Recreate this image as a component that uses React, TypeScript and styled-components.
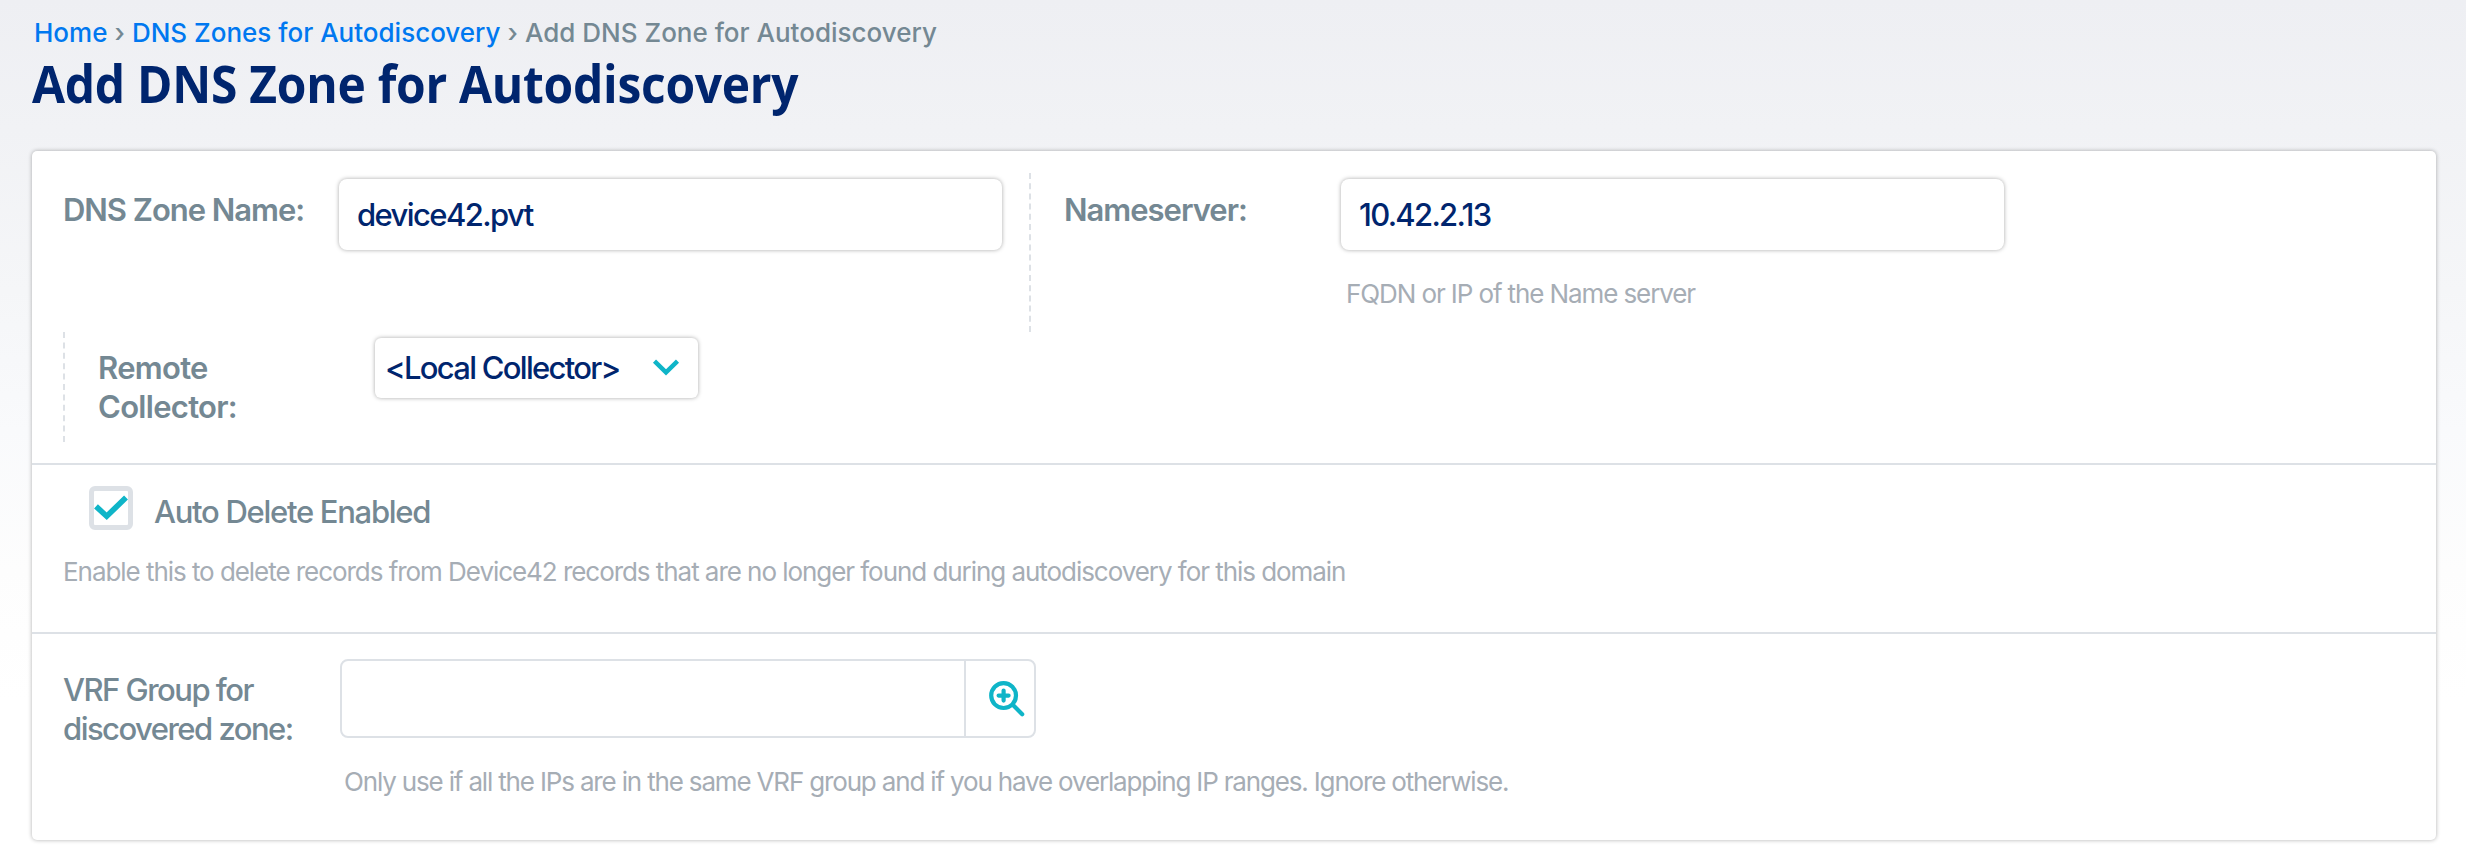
import React from 'react';
import styled, { createGlobalStyle, css } from 'styled-components';

const color = {
  navy: '#00256e',
  link: '#0078f0',
  slate: '#748893',
  hint: '#a6adb5',
  line: '#dde1e6',
  teal: '#0fb5c8',
};

const GlobalStyle = createGlobalStyle`
  *, *::before, *::after { box-sizing: border-box; }
  body {
    margin: 0;
    background: #fff;
    font-family: Inter, "Liberation Sans", sans-serif;
  }
`;

const Page = styled.main`
  min-height: 864px;
  padding: 17px 30px 24px 32px;
  background: linear-gradient(
    180deg,
    #eeeff3 0,
    #f1f2f5 130px,
    #f5f6f8 290px,
    #f9fafc 430px,
    #fdfdfd 570px,
    #fff 700px
  );
`;

const Breadcrumbs = styled.nav`
  display: flex;
  padding-left: 2px;
  font-size: 26px;
  font-weight: 500;
  line-height: 32px;
  color: ${color.slate};
  white-space: nowrap;
`;

const CrumbLink = styled.a`
  color: ${color.link};
  text-decoration: none;
`;

const CrumbSeparator = styled.span`
  width: 24.5px;
  text-align: center;
`;

const Title = styled.h1`
  width: max-content;
  margin: 4px 0 38px;
  font-family: "Open Sans", "Noto Sans", sans-serif;
  font-size: 52px;
  font-weight: 700;
  line-height: 60px;
  letter-spacing: -0.3px;
  color: ${color.navy};
  white-space: nowrap;
  transform: scaleX(0.922);
  transform-origin: left center;
`;

const Panel = styled.form`
  display: flex;
  flex-direction: column;
  height: 689px;
  background: #fff;
  border-radius: 5px;
  box-shadow: 0 0 4px rgba(0, 0, 0, 0.32);
`;

const Section = styled.section<{ $height: number; $padding: string }>`
  height: ${p => p.$height}px;
  padding: ${p => p.$padding};

  & + & {
    border-top: 2px solid ${color.line};
  }
`;

const FieldRow = styled.div<{ $height: number }>`
  display: flex;
  height: ${p => p.$height}px;
`;

const Field = styled.div<{ $width?: number; $divided?: boolean }>`
  display: flex;
  align-items: flex-start;
  width: ${p => (p.$width ? `${p.$width}px` : 'auto')};
  ${p =>
    p.$divided &&
    css`
      border-left: 2px dashed ${color.line};
      padding-left: 33px;
    `}
`;

const Label = styled.label<{ $bold?: boolean; $tracking: number; $width?: number; $top?: number }>`
  flex: none;
  width: ${p => (p.$width ? `${p.$width}px` : 'auto')};
  padding-top: ${p => p.$top ?? 0}px;
  font-size: 31px;
  font-weight: ${p => (p.$bold ? 600 : 500)};
  line-height: 39px;
  letter-spacing: ${p => p.$tracking}px;
  color: ${color.slate};
`;

const Control = styled.div<{ $top?: number }>`
  display: flex;
  flex-direction: column;
  align-items: flex-start;
  padding-top: ${p => p.$top ?? 0}px;
`;

const Input = styled.input<{ $tracking: number }>`
  width: 663px;
  height: 71px;
  padding: 0 18px;
  border: 0;
  border-radius: 8px;
  outline: none;
  background: #fff;
  box-shadow: 0 0 4px rgba(0, 0, 0, 0.34);
  font: 500 31px Inter, "Liberation Sans", sans-serif;
  letter-spacing: ${p => p.$tracking}px;
  color: ${color.navy};
`;

const Select = styled.div`
  display: flex;
  align-items: center;
  justify-content: space-between;
  width: 323px;
  height: 60px;
  padding: 0 18px 0 10px;
  border-radius: 6px;
  box-shadow: 0 0 4px rgba(0, 0, 0, 0.34);
  font-size: 31px;
  font-weight: 500;
  letter-spacing: -1.72px;
  line-height: 60px;
  color: ${color.navy};
  white-space: nowrap;
`;

const Help = styled.p<{ $top: number; $left?: number; $tracking: number }>`
  margin: ${p => p.$top}px 0 0 ${p => p.$left ?? 0}px;
  font-size: 26px;
  font-weight: 400;
  line-height: 32px;
  letter-spacing: ${p => p.$tracking}px;
  color: ${color.hint};
  white-space: nowrap;
`;

const CheckRow = styled.div`
  display: flex;
  align-items: flex-start;
  gap: 21px;
  height: 44px;
  padding-left: 26px;
`;

const Checkbox = styled.span`
  display: flex;
  align-items: center;
  justify-content: center;
  width: 44px;
  height: 44px;
  border: 5px solid ${color.line};
  border-radius: 6px;
  background: #fff;
`;

const Lookup = styled.div`
  display: flex;
  width: 696px;
  height: 79px;
  border: 2px solid ${color.line};
  border-radius: 8px;
  background: #fff;
`;

const LookupInput = styled.input`
  flex: 1;
  min-width: 0;
  border: 0;
  outline: none;
  background: transparent;
`;

const LookupButton = styled.button`
  display: flex;
  align-items: center;
  justify-content: center;
  width: 70px;
  padding: 0 0 0 13px;
  border: 0;
  border-left: 2px solid ${color.line};
  background: transparent;
`;

const ChevronIcon = () => (
  <svg width="28" height="18" viewBox="0 0 28 18" fill="none" stroke={color.teal} strokeWidth="4.4">
    <path d="M2.5 2.2 14 13.4 25.5 2.2" />
  </svg>
);

const CheckIcon = () => (
  <svg width="34" height="34" viewBox="0 0 34 34" fill="none" stroke={color.teal} strokeWidth="5.6">
    <path d="M2 15.4 12.7 25.2 32 6.6" />
  </svg>
);

const ZoomInIcon = () => (
  <svg width="36" height="36" viewBox="0 0 36 36" fill="none" stroke={color.teal} strokeWidth="4.2" strokeLinecap="round">
    <circle cx="14.6" cy="14.6" r="12.4" />
    <path d="M14.6 9.6v10M9.6 14.6h10" />
    <path d="M24 24 33.2 33.2" />
  </svg>
);

export default function App() {
  return (
    <>
      <GlobalStyle />
      <Page>
        <Breadcrumbs>
          <CrumbLink>Home</CrumbLink>
          <CrumbSeparator>›</CrumbSeparator>
          <CrumbLink>DNS Zones for Autodiscovery</CrumbLink>
          <CrumbSeparator>›</CrumbSeparator>
          <span>Add DNS Zone for Autodiscovery</span>
        </Breadcrumbs>
        <Title>Add DNS Zone for Autodiscovery</Title>

        <Panel>
          <Section $height={312} $padding="22px 31px 0">
            <FieldRow $height={159}>
              <Field $width={966}>
                <Label $bold $tracking={-1.03} $width={276} $top={17}>DNS Zone Name:</Label>
                <Control $top={6}>
                  <Input $tracking={-1.6} defaultValue="device42.pvt" />
                </Control>
              </Field>
              <Field $divided>
                <Label $bold $tracking={-1.0} $width={277} $top={17}>Nameserver:</Label>
                <Control $top={6}>
                  <Input $tracking={-1.7} defaultValue="10.42.2.13" />
                  <Help $top={28} $left={5} $tracking={-1.1}>FQDN or IP of the Name server</Help>
                </Control>
              </Field>
            </FieldRow>
            <FieldRow $height={110}>
              <Field $divided>
                <Label $bold $tracking={-0.7} $width={277} $top={16}>
                  Remote
                  <br />
                  Collector:
                </Label>
                <Control $top={6}>
                  <Select>
                    <span>&lt;Local Collector&gt;</span>
                    <ChevronIcon />
                  </Select>
                </Control>
              </Field>
            </FieldRow>
          </Section>

          <Section $height={169} $padding="21px 31px 0">
            <CheckRow>
              <Checkbox>
                <CheckIcon />
              </Checkbox>
              <Label $tracking={-1.28} $top={6}>Auto Delete Enabled</Label>
            </CheckRow>
            <Help $top={26} $tracking={-1.05}>
              Enable this to delete records from Device42 records that are no longer found during autodiscovery for this domain
            </Help>
          </Section>

          <Section $height={208} $padding="25px 31px 0">
            <Field>
              <Label $tracking={-1.52} $width={277} $top={11}>
                VRF Group for
                <br />
                discovered zone:
              </Label>
              <Control>
                <Lookup>
                  <LookupInput />
                  <LookupButton type="button">
                    <ZoomInIcon />
                  </LookupButton>
                </Lookup>
                <Help $top={28} $left={4} $tracking={-1.165}>
                  Only use if all the IPs are in the same VRF group and if you have overlapping IP ranges. Ignore otherwise.
                </Help>
              </Control>
            </Field>
          </Section>
        </Panel>
      </Page>
    </>
  );
}
